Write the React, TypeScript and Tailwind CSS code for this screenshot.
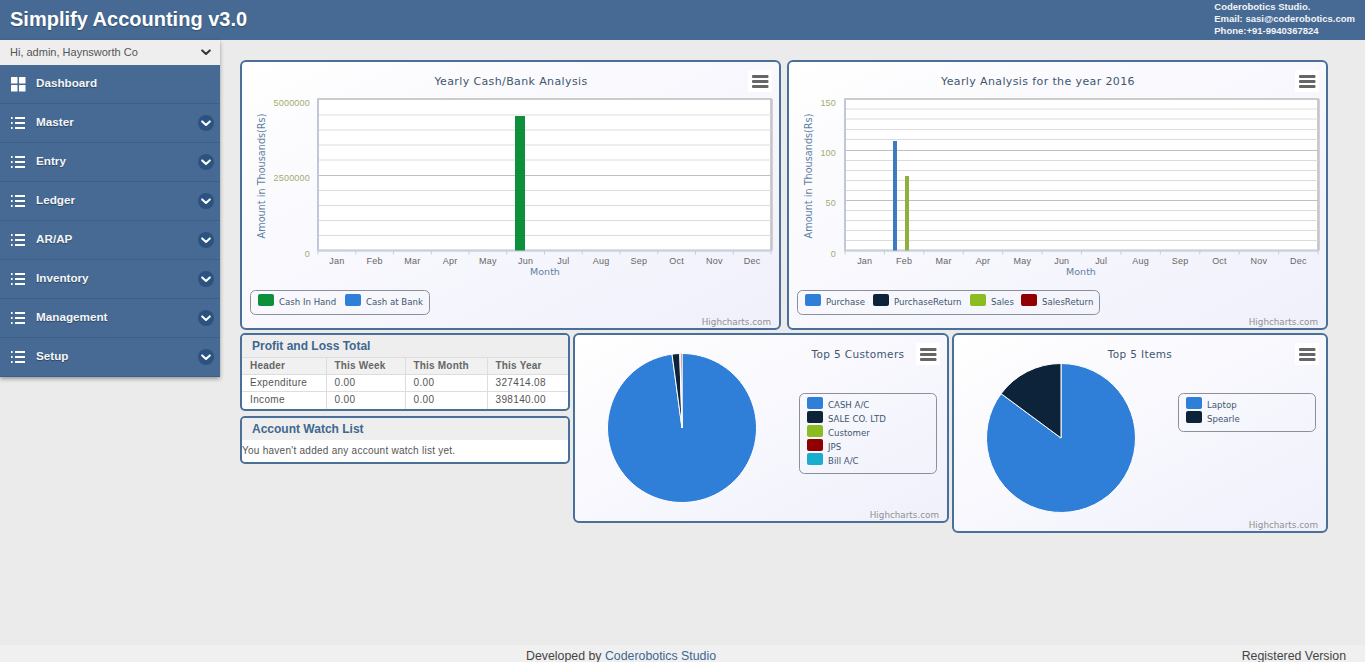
import React from "react";

const SANS = "[font-family:'Liberation_Sans',Arial,sans-serif]";
const chartFont = "'DejaVu Sans', Verdana, sans-serif";
const axisFont = "'Liberation Sans', Arial, sans-serif";
const months = ["Jan", "Feb", "Mar", "Apr", "May", "Jun", "Jul", "Aug", "Sep", "Oct", "Nov", "Dec"];
const menu = ["Master", "Entry", "Ledger", "AR/AP", "Inventory", "Management", "Setup"];

function ListIcon() {
  return (
    <svg width="14" height="14" viewBox="0 0 14 14" fill="#fff">
      <rect x="0" y="1" width="1.6" height="2" />
      <rect x="0" y="6" width="1.6" height="2" />
      <rect x="0" y="11" width="1.6" height="2" />
      <rect x="4" y="1" width="10" height="2" />
      <rect x="4" y="6" width="10" height="2" />
      <rect x="4" y="11" width="10" height="2" />
    </svg>
  );
}

function GridIcon() {
  return (
    <svg width="15" height="15" viewBox="0 0 15 15" fill="#fff">
      <rect x="0" y="0" width="6.5" height="6.5" rx="0.5" />
      <rect x="8" y="0" width="6.5" height="6.5" rx="0.5" />
      <rect x="0" y="8" width="6.5" height="6.5" rx="0.5" />
      <rect x="8" y="8" width="6.5" height="6.5" rx="0.5" />
    </svg>
  );
}

function Chevron({ color = "#fff" }: { color?: string }) {
  return (
    <svg width="10" height="7" viewBox="0 0 10 7" fill="none">
      <path d="M1.2 1.4 L5 5 L8.8 1.4" stroke={color} strokeWidth="2" strokeLinecap="round" strokeLinejoin="round" />
    </svg>
  );
}

function MenuRow({ label, dash }: { label: string; dash?: boolean }) {
  return (
    <div className="flex h-[39px] items-center border-b border-[#3b5f88] pl-[11px] pr-[6px]">
      <span className="flex w-[25px] items-center">{dash ? <GridIcon /> : <ListIcon />}</span>
      <span className="flex-1 pb-[2px] text-[11.7px] font-bold text-[#f4f6f9] [text-shadow:0_1px_1px_rgba(0,0,0,0.35)]">{label}</span>
      {!dash && (
        <span className="flex h-4 w-4 items-center justify-center rounded-full bg-[#2c5380]">
          <Chevron />
        </span>
      )}
    </div>
  );
}

function Burger({ x, y }: { x: number; y: number }) {
  return (
    <g>
      <rect x={x} y={y} width="24" height="22" fill="#fff" />
      <rect x={x + 4} y={y + 5} width="16.5" height="3" rx="1" fill="#666" />
      <rect x={x + 4} y={y + 10} width="16.5" height="3" rx="1" fill="#666" />
      <rect x={x + 4} y={y + 15} width="16.5" height="3" rx="1" fill="#666" />
    </g>
  );
}

type LegendItem = { c: string; t: string; x: number; y: number };

function Legend({ box, items }: { box: [number, number, number, number]; items: LegendItem[] }) {
  return (
    <g>
      <rect x={box[0]} y={box[1]} width={box[2]} height={box[3]} rx="5" fill="none" stroke="#8a8f98" strokeWidth="1" />
      {items.map((i) => (
        <g key={i.t}>
          <rect x={i.x} y={i.y} width="16" height="12" rx="2" fill={i.c} />
          <text x={i.x + 21} y={i.y + 11} fontFamily={chartFont} fontSize="8.6" fill="#3e576f">
            {i.t}
          </text>
        </g>
      ))}
    </g>
  );
}

function BarChart({
  vx, vw, left, right, title, titleX, yLabels, minor, bars, legendBox, legend, burgerX, yTitleX, yLabelX, monthX, creditX,
}: {
  vx: number; vw: number; left: number; right: number; title: string; titleX: number;
  yLabels: { t: string; y: number }[]; minor: number[]; bars: { x: number; w: number; top: number; c: string }[];
  legendBox: [number, number, number, number]; legend: LegendItem[]; burgerX: number; yTitleX: number; yLabelX: number; monthX: number; creditX: number;
}) {
  const top = 99;
  const bottom = 250.5;
  const step = (right - left) / 12;
  return (
    <svg className="block" width={vw} height="266" viewBox={`${vx} 62 ${vw} 266`}>
      <text x={titleX} y="85" textAnchor="middle" fontFamily={chartFont} fontSize="11" letterSpacing="0.38" fill="#3e576f">
        {title}
      </text>
      <Burger x={burgerX} y={70} />
      <rect x={left} y={top} width={right - left} height={bottom - top} fill="#fff" stroke="#c0c0c0" strokeWidth="1.6" />
      {minor.map((y) => (
        <line key={y} x1={left} x2={right} y1={y} y2={y} stroke="#dcdcdc" strokeWidth="1" />
      ))}
      {yLabels.slice(1, -1).map((l) => (
        <line key={l.t} x1={left} x2={right} y1={l.y - 5.5} y2={l.y - 5.5} stroke="#c0c0c0" strokeWidth="1" />
      ))}
      <line x1={left} x2={left} y1={top} y2={bottom} stroke="#c0c8d8" strokeWidth="2" />
      <line x1={left} x2={right} y1={bottom} y2={bottom} stroke="#c8d2e0" strokeWidth="2" />
      <line x1={right + 1} x2={right + 1} y1={top} y2={bottom} stroke="#c4c4c4" strokeWidth="1.5" />
      {months.map((m, i) => (
        <g key={m}>
          <line x1={left + i * step} x2={left + i * step} y1={bottom} y2={bottom + 4} stroke="#c0d0e0" strokeWidth="1" />
          <text x={left + (i + 0.5) * step} y="263.5" textAnchor="middle" fontFamily={axisFont} fontSize="9" letterSpacing="0.2" fill="#666">
            {m}
          </text>
        </g>
      ))}
      <line x1={right} x2={right} y1={bottom} y2={bottom + 4} stroke="#c0d0e0" strokeWidth="1" />
      {bars.map((b) => (
        <rect key={b.x} x={b.x} y={b.top} width={b.w} height={bottom - b.top} fill={b.c} />
      ))}
      {yLabels.map((l) => (
        <text key={l.t} x={yLabelX} y={l.y} textAnchor="end" fontFamily={axisFont} fontSize="9" letterSpacing="0.2" fill="#a3ab6f">
          {l.t}
        </text>
      ))}
      <text transform={`translate(${yTitleX} 176) rotate(-90)`} textAnchor="middle" fontFamily={chartFont} fontSize="9.7" fill="#5f7f9f">
        Amount in Thousands(Rs)
      </text>
      <text x={monthX} y="275" textAnchor="middle" fontFamily={chartFont} fontSize="9.5" fill="#5f7f9f">
        Month
      </text>
      <Legend box={legendBox} items={legend} />
      <text x={creditX} y="325" textAnchor="end" fontFamily={chartFont} fontSize="8.8" fill="#909090">
        Highcharts.com
      </text>
    </svg>
  );
}

function slice(cx: number, cy: number, r: number, a0: number, a1: number) {
  const p = (a: number) => `${cx + r * Math.sin((a * Math.PI) / 180)} ${cy - r * Math.cos((a * Math.PI) / 180)}`;
  const large = a1 - a0 > 180 ? 1 : 0;
  return `M${cx} ${cy} L${p(a0)} A${r} ${r} 0 ${large} 1 ${p(a1)} Z`;
}

function PieChart({
  vx, vy, vw, vh, cx, cy, slices, title, titleX, titleY, burger, legendBox, legend, creditX, creditY,
}: {
  vx: number; vy: number; vw: number; vh: number; cx: number; cy: number;
  slices: { a0: number; a1: number; c: string }[]; title: string; titleX: number; titleY: number;
  burger: [number, number]; legendBox: [number, number, number, number]; legend: LegendItem[]; creditX: number; creditY: number;
}) {
  return (
    <svg className="block" width={vw} height={vh} viewBox={`${vx} ${vy} ${vw} ${vh}`}>
      {slices.map((s) => (
        <path key={s.a0} d={slice(cx, cy, 74.5, s.a0, s.a1)} fill={s.c} stroke="#fff" strokeWidth="1" strokeLinejoin="round" />
      ))}
      <text x={titleX} y={titleY} textAnchor="middle" fontFamily={chartFont} fontSize="10.5" letterSpacing="0.35" fill="#3e576f">
        {title}
      </text>
      <Burger x={burger[0]} y={burger[1]} />
      <Legend box={legendBox} items={legend} />
      <text x={creditX} y={creditY} textAnchor="end" fontFamily={chartFont} fontSize="8.8" fill="#909090">
        Highcharts.com
      </text>
    </svg>
  );
}

const card = "rounded-[6px] border-2 border-[#4a6f98] bg-gradient-to-br from-[#ffffff] to-[#f0f0fc] overflow-hidden";
const panelTitle = "text-[12px] font-bold text-[#3f6790]";

const gridMinor1 = [115, 130, 145, 160, 190.5, 205.5, 220.5, 235.5];
const gridMinor2 = [109, 119, 129.5, 139.5, 160.5, 170.5, 180.5, 190.5, 210.5, 220.5, 230.5, 240.5];

const rows = [
  ["Expenditure", "0.00", "0.00", "327414.08"],
  ["Income", "0.00", "0.00", "398140.00"],
];

export default function App() {
  return (
    <div className={`flex h-[662px] w-[1365px] flex-col overflow-hidden bg-[#ebebeb] ${SANS}`}>
      <header className="flex h-10 shrink-0 items-start justify-between bg-[#466a93] pl-[10px]">
        <h1 className="mt-[6px] text-[20px] font-bold leading-[26px] text-white [text-shadow:0_1px_1px_rgba(0,0,0,0.3)]">
          Simplify Accounting v3.0
        </h1>
        <div className="mr-[10px] mt-[1px] text-[9.5px] font-bold leading-[12px] text-[#f2f4f7]">
          <div>Coderobotics Studio.</div>
          <div>Email: sasi@coderobotics.com</div>
          <div>Phone:+91-9940367824</div>
        </div>
      </header>

      <div className="flex min-h-0 flex-1">
        <aside className="w-[220px] shrink-0">
          <div className="shadow-[0_2px_4px_rgba(0,0,0,0.35)]">
            <div className="flex h-[25px] items-center justify-between bg-[#eeeeee] pl-[10px] pr-[9px] text-[11px] text-[#555]">
              <span>Hi, admin, Haynsworth Co</span>
              <Chevron color="#333" />
            </div>
            <div className="bg-[#466a93]">
              <MenuRow label="Dashboard" dash />
              {menu.map((m) => (
                <MenuRow key={m} label={m} />
              ))}
            </div>
          </div>
        </aside>

        <main className="flex-1 pl-5 pt-5">
          <div className="flex gap-[6px]">
            <div className={`${card} h-[270px] w-[541px]`}>
              <BarChart
                vx={242} vw={537} left={318} right={771} title="Yearly Cash/Bank Analysis" titleX={511}
                yLabels={[{ t: "5000000", y: 106 }, { t: "2500000", y: 181 }, { t: "0", y: 257 }]}
                minor={gridMinor1}
                bars={[{ x: 515, w: 10, top: 116, c: "#0d8f3c" }]}
                legendBox={[250.5, 290.5, 179, 24]}
                legend={[
                  { c: "#0d8f3c", t: "Cash In Hand", x: 258, y: 294 },
                  { c: "#2f7ed8", t: "Cash at Bank", x: 345, y: 294 },
                ]}
                burgerX={748} yTitleX={265} yLabelX={310} monthX={545} creditX={771}
              />
            </div>
            <div className={`${card} h-[270px] w-[541px]`}>
              <BarChart
                vx={789} vw={537} left={845} right={1318} title="Yearly Analysis for the year 2016" titleX={1038}
                yLabels={[{ t: "150", y: 106 }, { t: "100", y: 156 }, { t: "50", y: 206 }, { t: "0", y: 257 }]}
                minor={gridMinor2}
                bars={[
                  { x: 893, w: 4, top: 141, c: "#3a7cbf" },
                  { x: 905, w: 4, top: 176, c: "#8fb03c" },
                ]}
                legendBox={[797.5, 290.5, 302, 24]}
                legend={[
                  { c: "#2f7ed8", t: "Purchase", x: 805, y: 294 },
                  { c: "#0d233a", t: "PurchaseReturn", x: 873, y: 294 },
                  { c: "#8bbc21", t: "Sales", x: 970, y: 294 },
                  { c: "#910000", t: "SalesReturn", x: 1021, y: 294 },
                ]}
                burgerX={1295} yTitleX={812} yLabelX={836} monthX={1081} creditX={1318}
              />
            </div>
          </div>

          <div className="mt-[3px] flex items-start gap-[3px]">
            <div className="flex w-[330px] flex-col gap-[5px]">
              <section className="h-[78px] overflow-hidden rounded-[5px] border-2 border-[#4a6f98] bg-white">
                <div className={`${panelTitle} flex h-[22px] items-center bg-[#eeeeee] pl-[10px]`}>Profit and Loss Total</div>
                <table className="w-full border-collapse text-[10px] leading-[14px] tracking-[0.35px] text-[#555]">
                  <thead>
                    <tr className="h-[17px] border-y border-[#dddddd] bg-[#f1f1f1] text-[#666]">
                      <th className="w-[84px] border-r border-[#dddddd] pb-px pl-2 text-left font-bold tracking-[0.2px]">Header</th>
                      <th className="w-[79px] border-r border-[#dddddd] pb-px pl-2 text-left font-bold tracking-[0.2px]">This Week</th>
                      <th className="w-[82px] border-r border-[#dddddd] pb-px pl-2 text-left font-bold tracking-[0.2px]">This Month</th>
                      <th className="pb-px pl-2 text-left font-bold tracking-[0.2px]">This Year</th>
                    </tr>
                  </thead>
                  <tbody>
                    {rows.map((r) => (
                      <tr key={r[0]} className="h-[17px] border-b border-[#dddddd] last:border-b-0">
                        {r.map((c, i) => (
                          <td key={i} className={`pb-px pl-2 ${i < 3 ? "border-r border-[#dddddd]" : ""}`}>
                            {c}
                          </td>
                        ))}
                      </tr>
                    ))}
                  </tbody>
                </table>
              </section>
              <section className="h-[48px] overflow-hidden rounded-[5px] border-2 border-[#4a6f98] bg-white">
                <div className={`${panelTitle} flex h-[22px] items-center bg-[#eeeeee] pl-[10px]`}>Account Watch List</div>
                <p className="pt-[3px] text-[10px] tracking-[0.26px] text-[#555]">You haven't added any account watch list yet.</p>
              </section>
            </div>

            <div className={`${card} h-[190px] w-[376px]`}>
              <PieChart
                vx={575} vy={335} vw={372} vh={186} cx={682} cy={428}
                slices={[
                  { a0: 0, a1: 352.3, c: "#2f7ed8" },
                  { a0: 352.3, a1: 358.3, c: "#0d233a" },
                  { a0: 358.3, a1: 359, c: "#8bbc21" },
                  { a0: 359, a1: 360, c: "#910000" },
                ]}
                title="Top 5 Customers" titleX={858} titleY={358} burger={[916, 343]}
                legendBox={[799.5, 393.5, 137, 80]}
                legend={[
                  { c: "#2f7ed8", t: "CASH A/C", x: 807, y: 397 },
                  { c: "#0d233a", t: "SALE CO. LTD", x: 807, y: 411 },
                  { c: "#8bbc21", t: "Customer", x: 807, y: 425 },
                  { c: "#910000", t: "JPS", x: 807, y: 439 },
                  { c: "#1aadce", t: "Bill A/C", x: 807, y: 453 },
                ]}
                creditX={939} creditY={518}
              />
            </div>

            <div className={`${card} h-[200px] w-[376px]`}>
              <PieChart
                vx={954} vy={335} vw={372} vh={196} cx={1061} cy={438}
                slices={[
                  { a0: 0, a1: 306.5, c: "#2f7ed8" },
                  { a0: 306.5, a1: 360, c: "#0d233a" },
                ]}
                title="Top 5 Items" titleX={1140} titleY={358} burger={[1295, 343]}
                legendBox={[1178.5, 393.5, 137, 38]}
                legend={[
                  { c: "#2f7ed8", t: "Laptop", x: 1186, y: 397 },
                  { c: "#0d233a", t: "Spearle", x: 1186, y: 411 },
                ]}
                creditX={1318} creditY={528}
              />
            </div>
          </div>
        </main>
      </div>

      <footer className="flex h-[17px] shrink-0 items-center justify-between bg-[#f0f0f0] pl-[526px] pr-[19px] pt-[5px] text-[12.35px] text-[#444]">
        <span>
          Developed by <span className="text-[#3f6790]">Coderobotics Studio</span>
        </span>
        <span>Registered Version</span>
      </footer>
    </div>
  );
}
